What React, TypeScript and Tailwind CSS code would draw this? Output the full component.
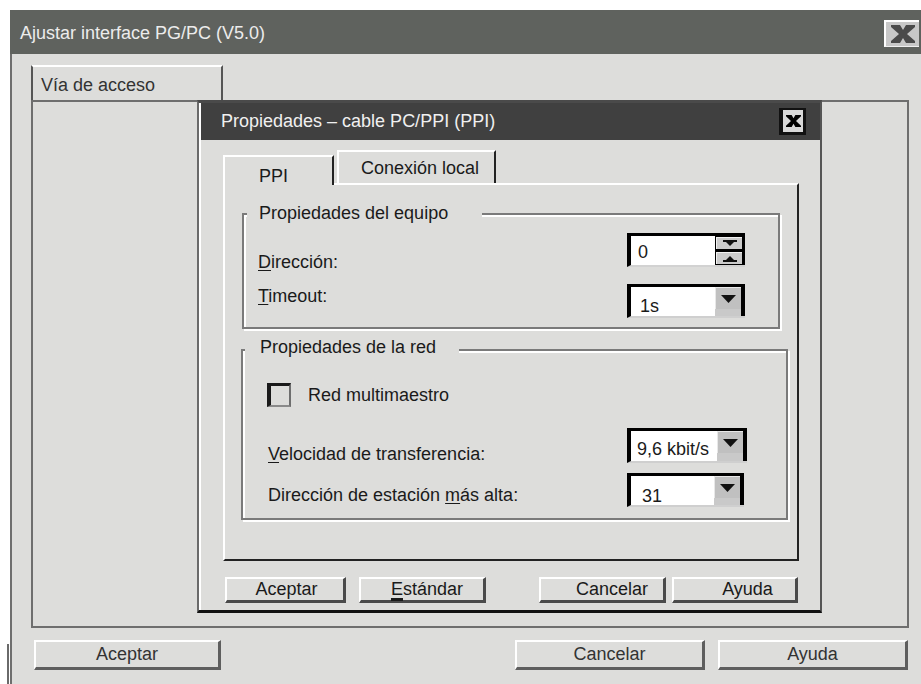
import React from "react";

const BG = "bg-[#dddddb]";

// Bold slab "X" used on the window close boxes
function CloseGlyph({ w, h, color }: { w: number; h: number; color: string }) {
  return (
    <svg width={w} height={h} viewBox="0 0 24 18" preserveAspectRatio="none">
      <polygon
        points="0,0 9,0 12,5 15,0 24,0 24,2 16,9 24,16 24,18 15,18 12,13 9,18 0,18 0,16 8,9 0,2"
        fill={color}
      />
    </svg>
  );
}

function DownTriangle() {
  return (
    <svg width="15" height="8" viewBox="0 0 15 8">
      <polygon points="0,0 15,0 7.5,8" fill="#111" />
    </svg>
  );
}

function SpinUp() {
  return (
    <svg width="14" height="7" viewBox="0 0 14 7">
      <rect x="0" y="0" width="14" height="2" fill="#111" />
      <polygon points="3,2 11,2 7,6" fill="#111" />
    </svg>
  );
}

function SpinDown() {
  return (
    <svg width="14" height="7" viewBox="0 0 14 7">
      <polygon points="7,1 11,5 3,5" fill="#111" />
      <rect x="0" y="5" width="14" height="2" fill="#111" />
    </svg>
  );
}

function ComboBox({
  value,
  widthClass,
  heightClass,
  textClass,
}: {
  value: string;
  widthClass: string;
  heightClass: string;
  textClass: string;
}) {
  return (
    <div
      className={`${widthClass} ${heightClass} flex border-t-[3px] border-l-[4px] border-b-2 border-r-0 border-t-black border-l-black border-b-[#cfcfcf]`}
    >
      <div className={`flex-1 bg-white ${textClass}`}>{value}</div>
      <div className="w-[30px] flex flex-col bg-[#c9c9c9] border-r-[4px] border-r-black">
        <div className="h-[22px] bg-[#c0c0c0] border-t border-l border-t-[#e8e8e8] border-l-[#e8e8e8] flex items-center justify-center">
          <DownTriangle />
        </div>
      </div>
    </div>
  );
}

function DialogButton({
  widthClass,
  marginClass,
  padClass,
  children,
}: {
  widthClass: string;
  marginClass: string;
  padClass: string;
  children: React.ReactNode;
}) {
  return (
    <div
      className={`${widthClass} ${marginClass} ${padClass} h-[26px] flex items-center justify-center border-t-2 border-l-2 border-r-[3px] border-b-[3px] border-t-white border-l-white border-r-[#4a4a4a] border-b-[#4a4a4a] text-[#1a1a1a]`}
    >
      {children}
    </div>
  );
}

function OuterButton({
  widthClass,
  marginClass,
  children,
}: {
  widthClass: string;
  marginClass: string;
  children: React.ReactNode;
}) {
  return (
    <div
      className={`${widthClass} ${marginClass} h-[30px] flex items-center justify-center border-t-2 border-l-2 border-r-[3px] border-b-[3px] border-t-white border-l-white border-r-[#5e5e5e] border-b-[#5e5e5e] text-[#333]`}
    >
      {children}
    </div>
  );
}

export default function App() {
  return (
    <div className="relative w-[921px] h-[684px] overflow-hidden bg-white flex font-['Liberation_Sans',Arial,Helvetica,sans-serif] text-[18px] leading-[21px]">
      {/* stray edge of a window behind */}
      <div className="w-[10px] h-full flex flex-col justify-end">
        <div className="ml-[7px] w-[2px] h-[40px] bg-[#6a6a6a]" />
      </div>

      {/* Ajustar interface PG/PC window */}
      <div className="mt-[10px] w-[911px] h-[674px] flex flex-col">
        <div className="h-[44px] shrink-0 bg-[#5f625e] flex items-start justify-between pl-[10px] pr-[2px]">
          <span className="mt-[13px] text-[#ececec]">Ajustar interface PG/PC (V5.0)</span>
          <div className="mt-[10px] w-[35px] h-[27px] bg-[#c8c8c8] border-t-2 border-l-2 border-b border-t-white border-l-white border-b-[#f0f0f0] flex items-center justify-center">
            <CloseGlyph w={24} h={18} color="#4a4a4a" />
          </div>
        </div>

        <div className={`flex-1 ${BG} border-l-2 border-l-[#6e6e6e] flex flex-col`}>
          {/* tab */}
          <div className="mt-[11px] ml-[19px] w-[192px] h-[35px] border-t-2 border-l-2 border-r-2 border-t-white border-l-[#555] border-r-[#555] pl-[8px] pt-[8px] text-[#333]">
            Vía de acceso
          </div>
          {/* tab page */}
          <div className="ml-[19px] w-[878px] h-[528px] border-2 border-t-[#6e6e6e] border-l-[#6e6e6e] border-r-[#6e6e6e] border-b-[#6e6e6e]" />

          <div className="mt-[12px] flex">
            <OuterButton widthClass="w-[187px]" marginClass="ml-[22px]">Aceptar</OuterButton>
            <OuterButton widthClass="w-[190px]" marginClass="ml-[294px]">Cancelar</OuterButton>
            <OuterButton widthClass="w-[190px]" marginClass="ml-[13px]">Ayuda</OuterButton>
          </div>
        </div>
      </div>

      {/* Propiedades dialog, floating over the main window */}
      <div className="absolute left-[197px] top-[100px] w-[625px] h-[513px] flex flex-col border-l-2 border-t-[3px] border-r-2 border-b-[3px] border-l-[#6a6a6a] border-t-[#4a4a4a] border-r-[#555] border-b-[#111]">
        <div className="flex-1 flex flex-col border-l-2 border-l-white">
          <div className="h-[37px] shrink-0 bg-[#404040] flex items-center justify-between pl-[20px] pr-[14px]">
            <span className="text-[#f0f0f0]">Propiedades – cable PC/PPI (PPI)</span>
            <div className="w-[27px] h-[27px] bg-[#111] pt-[2px] pl-[4px] pr-[3px] pb-[3px]">
              <div className="w-full h-full bg-[#d8d8d8] flex items-center justify-center">
                <CloseGlyph w={15} h={12} color="#000" />
              </div>
            </div>
          </div>

          <div className={`flex-1 ${BG} flex flex-col`}>
            {/* tab strip */}
            <div className="h-[43px] shrink-0 flex items-end pl-[22px]">
              <div className={`relative z-10 -mb-[2px] w-[111px] h-[30px] ${BG} border-t-2 border-l-2 border-r-2 border-t-white border-l-white border-r-[#222] pl-[34px] pt-[9px] text-[#1a1a1a]`}>
                PPI
              </div>
              <div className="ml-[3px] w-[159px] h-[33px] border-t-2 border-l-2 border-r-2 border-t-white border-l-white border-r-[#222] pl-[22px] pt-[6px] text-[#1a1a1a]">
                Conexión local
              </div>
            </div>

            {/* PPI page */}
            <div className="ml-[22px] w-[576px] h-[378px] shrink-0 border-2 border-t-white border-l-white border-r-[#222] border-b-[#222] pl-[17px] pt-[28px] flex flex-col text-[#1a1a1a]">
              {/* Propiedades del equipo */}
              <div className="relative w-[538px] h-[116px] shrink-0 border-2 border-t-[#7a7a7a] border-l-[#7a7a7a] border-r-[#7a7a7a] border-b-[#7a7a7a] shadow-[2px_2px_0_#ffffff,inset_2px_2px_0_#ffffff] pt-[18px] pl-[14px] pr-[33px] flex flex-col">
                <span className={`absolute left-[3px] -top-[12px] ${BG} pl-[12px] pr-[34px]`}>
                  Propiedades del equipo
                </span>
                <div className="h-[34px] flex justify-between items-start">
                  <span className="mt-[19px]">
                    <span className="underline decoration-1 underline-offset-[2px]">D</span>irección:
                  </span>
                  <div className="w-[118px] h-[34px] flex border-t-[3px] border-l-[4px] border-b-2 border-t-black border-l-black border-b-[#d2d2d2]">
                    <div className="flex-1 bg-white pl-[7px] pt-[6px]">0</div>
                    <div className="w-[30px] bg-black pt-[1px] pb-[1px] pl-[1px] pr-[3px] flex flex-col gap-[3px]">
                      <div className="flex-1 bg-[#cbcbcb] border-t border-l border-t-[#f0f0f0] border-l-[#f0f0f0] flex items-center justify-center">
                        <SpinUp />
                      </div>
                      <div className="flex-1 bg-[#cbcbcb] border-t border-l border-t-[#f0f0f0] border-l-[#f0f0f0] flex items-center justify-center">
                        <SpinDown />
                      </div>
                    </div>
                  </div>
                </div>
                <div className="mt-[17px] h-[34px] flex justify-between items-start">
                  <span className="mt-[2px]">
                    <span className="underline decoration-1 underline-offset-[2px]">T</span>imeout:
                  </span>
                  <ComboBox value="1s" widthClass="w-[118px]" heightClass="h-[34px]" textClass="pl-[9px] pt-[9px]" />
                </div>
              </div>

              {/* Propiedades de la red */}
              <div className="relative -ml-[1px] mt-[20px] w-[547px] h-[171px] shrink-0 border-2 border-t-[#7a7a7a] border-l-[#7a7a7a] border-r-[#7a7a7a] border-b-[#7a7a7a] shadow-[2px_2px_0_#ffffff,inset_2px_2px_0_#ffffff] pt-[32px] flex flex-col">
                <span className={`absolute left-[2px] -top-[14px] ${BG} pl-[15px] pr-[23px]`}>
                  Propiedades de la red
                </span>
                <div className="flex items-center pl-[24px]">
                  <div className="w-[24px] h-[24px] border-t-[3px] border-l-[4px] border-r-2 border-b-2 border-t-[#1a1a1a] border-l-[#1a1a1a] border-r-[#6e6e6e] border-b-[#8a8a8a]" />
                  <span className="ml-[17px]">Red multimaestro</span>
                </div>
                <div className="mt-[21px] h-[35px] flex justify-between items-start pl-[25px] pr-[39px]">
                  <span className="mt-[16px]">
                    <span className="underline decoration-1 underline-offset-[2px]">V</span>elocidad de transferencia:
                  </span>
                  <ComboBox value="9,6 kbit/s" widthClass="w-[120px]" heightClass="h-[35px]" textClass="pl-[6px] pt-[8px] whitespace-nowrap" />
                </div>
                <div className="mt-[10px] h-[34px] flex justify-between items-start pl-[25px] pr-[42px]">
                  <span className="mt-[12px]">
                    Dirección de estación <span className="underline decoration-1 underline-offset-[2px]">m</span>ás alta:
                  </span>
                  <ComboBox value="31" widthClass="w-[117px]" heightClass="h-[34px]" textClass="pl-[11px] pt-[10px]" />
                </div>
              </div>
            </div>

            {/* dialog buttons */}
            <div className="mt-[16px] flex">
              <DialogButton widthClass="w-[121px]" marginClass="ml-[24px]" padClass="pl-[3px]">
                Aceptar
              </DialogButton>
              <DialogButton widthClass="w-[127px]" marginClass="ml-[13px]" padClass="pl-[10px]">
                <span>
                  <span className="underline decoration-[3px] underline-offset-[3px]">E</span>stándar
                </span>
              </DialogButton>
              <DialogButton widthClass="w-[127px]" marginClass="ml-[53px]" padClass="pl-[20px]">
                Cancelar
              </DialogButton>
              <DialogButton widthClass="w-[126px]" marginClass="ml-[6px]" padClass="pl-[26px]">
                Ayuda
              </DialogButton>
            </div>
          </div>
        </div>
      </div>
    </div>
  );
}
